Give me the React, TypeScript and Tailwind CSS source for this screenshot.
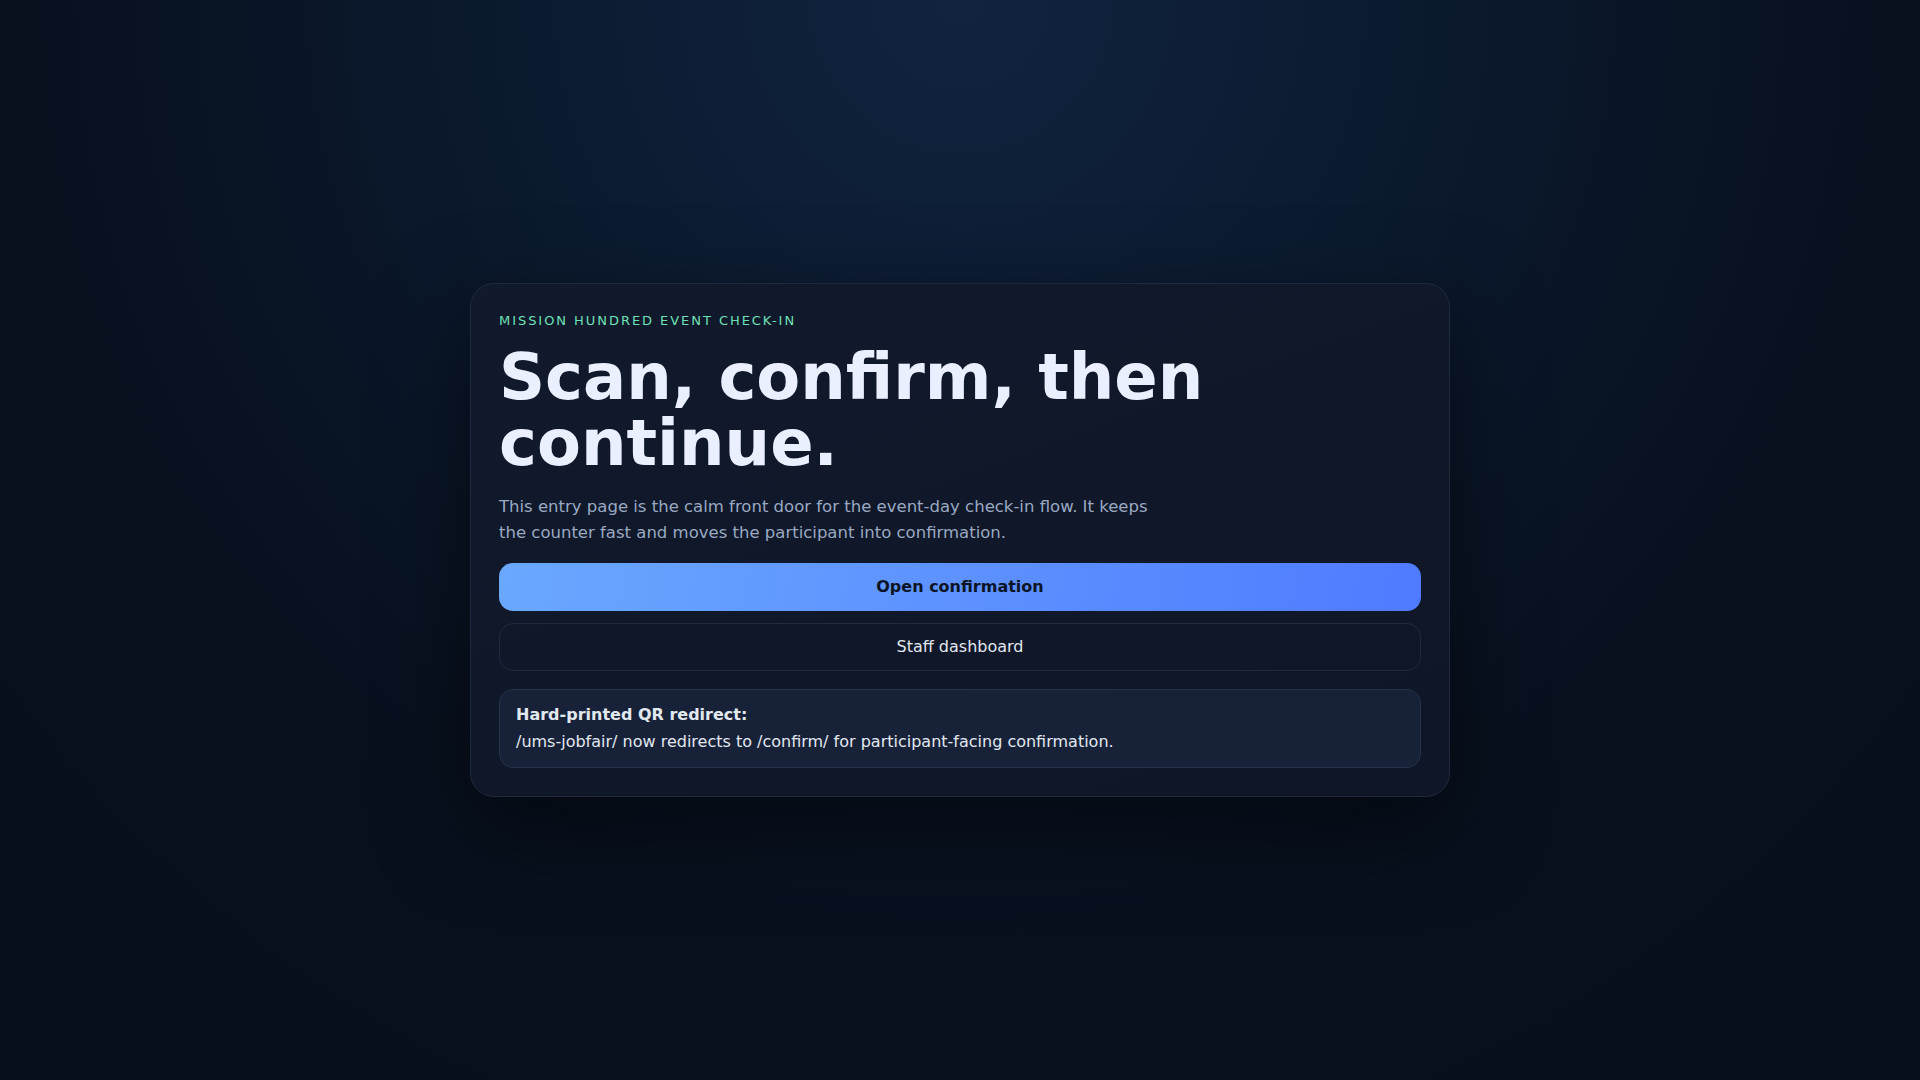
export default function App() {
  return (
    <div className="min-h-screen flex items-center justify-center bg-[#070f1c] bg-[radial-gradient(circle_at_50%_0%,#11233f_0%,#0c1b31_28%,#08111f_62%,#070f1c_100%)] font-['DejaVu_Sans',sans-serif]">
      <main className="w-[980px] rounded-3xl border border-[#1e293b] bg-[linear-gradient(160deg,#111a2c_0%,#0e1627_100%)] px-7 pt-7 pb-7 shadow-[0_30px_90px_rgba(0,0,0,0.5)]">
        {/* Eyebrow */}
        <p className="text-[13px] leading-[18px] tracking-[0.15em] text-[#6ee0b8] uppercase">
          Mission Hundred Event Check-in
        </p>

        {/* Headline */}
        <h1 className="mt-[14px] text-[64px] leading-[1.04] font-bold text-[#eaf0ff]">
          Scan, confirm, then
          <br />
          continue.
        </h1>

        <p className="mt-[17px] max-w-[670px] text-[16.5px] leading-[25.6px] text-[#9aa9c2]">
          This entry page is the calm front door for the event-day check-in flow. It keeps the counter fast and moves the participant into confirmation.
        </p>

        {/* Actions */}
        <div className="mt-[18px] flex flex-col gap-3">
          <button className="h-12 w-full rounded-[14px] bg-[linear-gradient(100deg,#6aa8ff_0%,#5a8dff_60%,#4f7bff_100%)] text-base font-bold text-[#0b1424]">
            Open confirmation
          </button>
          <button className="h-12 w-full rounded-[14px] border border-[#1f2a3d] bg-transparent text-base text-[#e2e8f0]">
            Staff dashboard
          </button>
        </div>

        {/* Note */}
        <div className="mt-[18px] rounded-[14px] border border-[#26324a] bg-[#172239] px-4 py-3 text-base leading-[26.5px] text-[#e2e8f0]">
          <strong className="block font-bold">Hard-printed QR redirect:</strong>
          <span>/ums-jobfair/ now redirects to /confirm/ for participant-facing confirmation.</span>
        </div>
      </main>
    </div>
  );
}
